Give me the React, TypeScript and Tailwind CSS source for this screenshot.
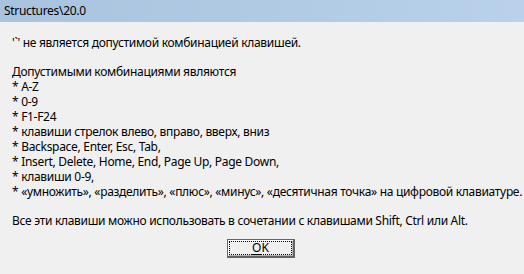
export default function App() {
  const lines = [
    '* A-Z',
    '* 0-9',
    '* F1-F24',
    '* клавиши стрелок влево, вправо, вверх, вниз',
    '* Backspace, Enter, Esc, Tab,',
    '* Insert, Delete, Home, End, Page Up, Page Down,',
    '* клавиши 0-9,',
    '* «умножить», «разделить», «плюс», «минус», «десятичная точка» на цифровой клавиатуре.',
  ];

  return (
    <div
      className="flex h-[274px] w-[524px] flex-col overflow-hidden bg-[#f0f0f0] text-[12px] tracking-[-0.3px] text-black"
      style={{ fontFamily: '"Noto Sans", "Open Sans", sans-serif' }}
    >
      <div className="flex h-[22px] items-center bg-gradient-to-r from-[#a9c3de] to-[#b9d1ea] pl-[4px] pb-[1px] leading-none">
        Structures\20.0
      </div>
      <div className="flex flex-col pl-[12px] pt-[13px] leading-[15px]">
        <p>'`' не является допустимой комбинацией клавишей.</p>
        <p className="mt-[14px]">Допустимыми комбинациями являются</p>
        {lines.map((l) => (
          <p key={l} className="whitespace-nowrap">
            {l}
          </p>
        ))}
        <p className="mt-[14px]">Все эти клавиши можно использовать в сочетании с клавишами Shift, Ctrl или Alt.</p>
      </div>
      <div className="flex pl-[227px] pt-[11px]">
        <button className="flex h-[19px] w-[68px] items-center justify-center border border-r-2 border-b-2 border-[#646464] bg-[#f0f0f0] p-[1px] tracking-normal shadow-[inset_1px_1px_0_#ffffff,inset_-1px_-1px_0_#b4b4b4]">
          <span className="flex h-full w-full items-center justify-center border border-dotted border-black leading-none">
            <span className="underline underline-offset-2">O</span>K
          </span>
        </button>
      </div>
    </div>
  );
}
